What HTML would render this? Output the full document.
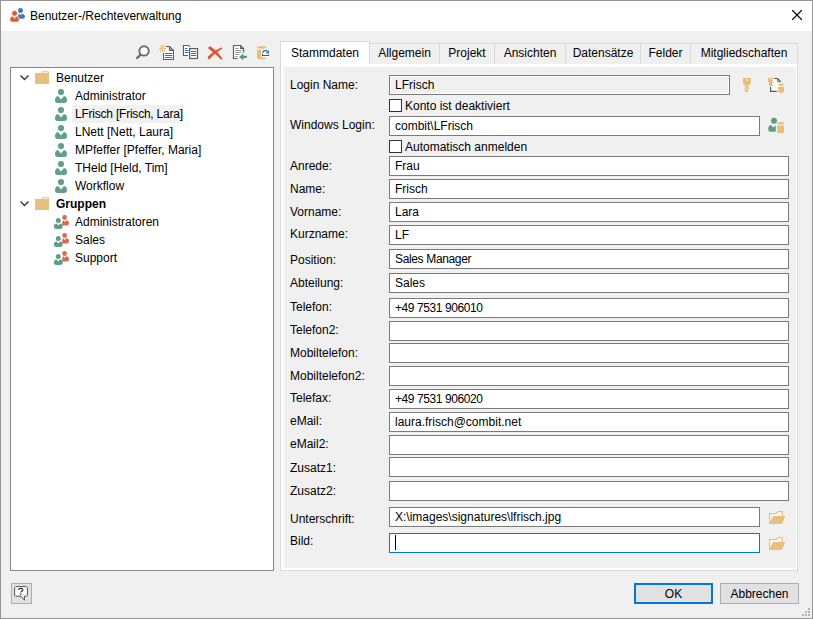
<!DOCTYPE html>
<html><head><meta charset="utf-8"><style>
html,body{margin:0;padding:0;width:813px;height:619px;overflow:hidden;background:#f0f0f0}
*{box-sizing:border-box}
body{font-family:"Liberation Sans",sans-serif;font-size:12px;color:#000;position:relative}
.a{position:absolute}
.t{position:absolute;white-space:pre;line-height:18px;height:18px}
#win{position:absolute;left:0;top:0;width:813px;height:619px;border:1px solid #969696;background:#f0f0f0}
#title{position:absolute;left:1px;top:1px;width:811px;height:30px;background:#fff}
.tree{position:absolute;left:10px;top:67px;width:264px;height:504px;border:1px solid #828790;background:#fff}
.tabs{position:absolute;left:280px;top:63px;width:518px;height:508px;border:1px solid #d9d9d9;background:#fff}
.page{position:absolute;left:284px;top:67px;width:512px;height:501px;background:#f0f0f0}
.tab{position:absolute;top:43px;height:21px;border:1px solid #d9d9d9;border-bottom:none;background:#f0f0f0;line-height:18px;padding-top:0px;text-align:center;white-space:pre}
.tab.sel{top:41px;height:23px;background:#fff;z-index:2;line-height:22px}
.tb{position:absolute;height:20px;border:1px solid #7a7a7a;background:#fff;padding-left:5px;line-height:18px;white-space:pre}
.lbl{position:absolute;left:290px;white-space:pre;line-height:18px;height:18px}
.cb{position:absolute;left:389px;width:13px;height:13px;border:1px solid #333;background:#fff}
.btn{position:absolute;top:583px;height:21px;border:1px solid #adadad;background:#e1e1e1;text-align:center;line-height:19px;padding-top:1px;white-space:pre}
.sel-hl{position:absolute;background:#f1f1f1}
</style></head><body>
<div id="win"></div><div id="title"></div>
<svg class="a" style="left:8px;top:7px" width="20" height="17" viewBox="8 7 20 17">
<circle cx="20.5" cy="10.4" r="2.5" fill="#3f7cbb"/>
<path d="M18 16.6Q18 13.9 19.5 13.7L20.5 15.4L21.5 13.7Q25 14 25 16.6Q25 18.8 22.6 18.8H19.6Q18 18.8 18 16.6Z" fill="#3f7cbb"/>
<circle cx="14.6" cy="13.3" r="2.9" fill="#e05b35" stroke="#fff" stroke-width="0.7"/>
<path d="M9.8 19.8Q9.8 16.4 13 16.1L14.6 18.3L16.2 16.1Q19.3 16.4 19.3 19.8Q19.3 22.1 16.9 22.1H12.2Q9.8 22.1 9.8 19.8Z" fill="#e05b35" stroke="#fff" stroke-width="0.6"/>
</svg>
<div class="t" style="left:30px;top:7px">Benutzer-/Rechteverwaltung</div>
<svg class="a" style="left:790px;top:8px" width="14" height="14" viewBox="790 8 14 14"><path d="M792.5 10.5L801.5 19.5M801.5 10.5L792.5 19.5" stroke="#000" stroke-width="1.1" stroke-linecap="round"/></svg>
<svg class="a" style="left:134px;top:42px" width="140" height="20" viewBox="134 42 140 20">
<circle cx="144.05" cy="50.95" r="4.7" fill="#fff" stroke="#6a6a6a" stroke-width="1.9"/>
<path d="M140.4 54.8L137.1 58" stroke="#6a6a6a" stroke-width="2.3" stroke-linecap="round"/>
<!-- new doc -->
<path d="M166 46.6H169.6L173.4 50.4V59.4H163.6V53" fill="#fff" stroke="#5c5c5c" stroke-width="1.2"/>
<path d="M169.6 46.6V50.4H173.4" fill="none" stroke="#5c5c5c" stroke-width="1.1"/>
<path d="M165.4 47.5H169V51H173V59H164V53H165.4Z" fill="#fff"/>
<path d="M169.6 46.6V50.4H173.4" fill="none" stroke="#5c5c5c" stroke-width="1.1"/>
<path d="M165.4 53.5H171.9M165.4 55.5H171.9M165.4 57.5H171.9" stroke="#3a6db0" stroke-width="1.2" stroke-linecap="round"/>
<g stroke="#eab765" stroke-width="1.2"><path d="M159.1 48.5H166M162.5 45V52"/></g>
<g fill="#eab765"><circle cx="160.3" cy="46.3" r="0.75"/><circle cx="164.7" cy="46.3" r="0.75"/><circle cx="160.3" cy="50.7" r="0.75"/><circle cx="164.7" cy="50.7" r="0.75"/><circle cx="162.5" cy="48.5" r="1.6"/></g>
<circle cx="162.5" cy="48.5" r="0.7" fill="#fff"/>
<!-- copy -->
<path d="M188 55.4H183.5V45.5H188.6L190 46.9" fill="#fff" stroke="#5c5c5c" stroke-width="1.2"/>
<rect x="184" y="46" width="5" height="9" fill="#fff"/>
<path d="M185.3 48.5H186.8M185.3 50.5H188M185.3 52.5H188" stroke="#3a6db0" stroke-width="1.2" stroke-linecap="round"/>
<rect x="189.6" y="48.6" width="7.9" height="9.9" fill="#fff" stroke="#5c5c5c" stroke-width="1.2"/>
<path d="M191.4 51.5H195.8M191.4 53.5H195.8M191.4 55.5H195.8" stroke="#3a6db0" stroke-width="1.2" stroke-linecap="round"/>
<!-- delete -->
<path d="M208.4 48.2Q209 46.6 210.4 46.8Q216 50 222 58.6Q221.6 59.6 221 59.3Q215.6 53 208.4 48.2Z" fill="#d9512c" stroke="#d9512c" stroke-width="0.7" stroke-linejoin="round"/>
<path d="M221.8 48.7Q222.2 47.6 221.2 47.9Q214.6 50.4 208.2 56.8Q207.6 58.4 209.2 59.2Q215 52 221.8 48.7Z" fill="#d9512c" stroke="#d9512c" stroke-width="0.7" stroke-linejoin="round"/>
<!-- import -->
<path d="M237.7 58.5H233.5V45.5H240.6L243.5 48.5V52.5" fill="#fff" stroke="#5c5c5c" stroke-width="1.2"/>
<path d="M240.6 45.6V48.4H243.5" fill="none" stroke="#5c5c5c" stroke-width="1.1"/>
<path d="M235.3 48.5H238.7M235.3 50.5H241.5M235.3 52.5H241.5M235.3 54.5H239.5M235.3 56.5H237.7" stroke="#8c8c8c" stroke-width="0.9"/>
<path d="M246.9 56.9H241.5" stroke="#4e9a7c" stroke-width="2.2"/>
<path d="M239 56.9L243.4 53.6V60.2Z" fill="#4e9a7c"/>
<!-- db refresh -->
<path d="M257 49.6V57.8Q257 59.6 261.6 59.6Q266.2 59.6 266.2 57.8V49.6Q261.6 50.8 257 49.6Z" fill="#e8c07a"/>
<ellipse cx="261.6" cy="47.3" rx="4.6" ry="1.4" fill="#e8c07a"/>
<rect x="261.3" y="49.5" width="8" height="7.8" fill="#fff"/>
<path d="M262.5 53.8V55.5H268.5V54.4" fill="none" stroke="#555" stroke-width="1.1"/>
<path d="M262.6 52.8Q263.4 50.5 265.4 50.5Q266.8 50.5 267.5 51.6" fill="none" stroke="#3978c0" stroke-width="1.5"/>
<path d="M265.6 53.6H269V49.8Z" fill="#3978c0"/>
</svg>
<div class="tree"></div>
<svg class="a" style="left:19px;top:74px" width="12" height="8" viewBox="0 0 12 8"><path d="M1.5 1.5L5.5 5.5L9.5 1.5" fill="none" stroke="#3c3c3c" stroke-width="1.5"/></svg>
<svg class="a" style="left:35px;top:70px" width="16" height="16" viewBox="0 0 16 16"><path d="M0 3H7V2Q7 1 8.2 1H12.8Q14 1 14 2.2V14H0Z" fill="#e8c07d"/><rect x="8" y="1.8" width="5" height="1" rx="0.4" fill="#fff"/></svg>
<div class="t" style="left:56px;top:69px;">Benutzer</div>
<svg class="a" style="left:53px;top:88px" width="16" height="16" viewBox="0 0 16 16"><circle cx="8" cy="4" r="3.1" fill="#61a08a"/><path d="M2 12.2Q2 8.4 5 8L8 11.6L11 8Q14 8.4 14 12.2Q14 14.9 11.2 14.9H4.8Q2 14.9 2 12.2Z" fill="#61a08a"/></svg>
<div class="t" style="left:75px;top:87px;">Administrator</div>
<div class="sel-hl" style="left:72px;top:105px;width:111px;height:18px"></div>
<svg class="a" style="left:53px;top:106px" width="16" height="16" viewBox="0 0 16 16"><circle cx="8" cy="4" r="3.1" fill="#61a08a"/><path d="M2 12.2Q2 8.4 5 8L8 11.6L11 8Q14 8.4 14 12.2Q14 14.9 11.2 14.9H4.8Q2 14.9 2 12.2Z" fill="#61a08a"/></svg>
<div class="t" style="left:75px;top:105px;letter-spacing:-0.22px">LFrisch [Frisch, Lara]</div>
<svg class="a" style="left:53px;top:124px" width="16" height="16" viewBox="0 0 16 16"><circle cx="8" cy="4" r="3.1" fill="#61a08a"/><path d="M2 12.2Q2 8.4 5 8L8 11.6L11 8Q14 8.4 14 12.2Q14 14.9 11.2 14.9H4.8Q2 14.9 2 12.2Z" fill="#61a08a"/></svg>
<div class="t" style="left:75px;top:123px;">LNett [Nett, Laura]</div>
<svg class="a" style="left:53px;top:142px" width="16" height="16" viewBox="0 0 16 16"><circle cx="8" cy="4" r="3.1" fill="#61a08a"/><path d="M2 12.2Q2 8.4 5 8L8 11.6L11 8Q14 8.4 14 12.2Q14 14.9 11.2 14.9H4.8Q2 14.9 2 12.2Z" fill="#61a08a"/></svg>
<div class="t" style="left:75px;top:141px;">MPfeffer [Pfeffer, Maria]</div>
<svg class="a" style="left:53px;top:160px" width="16" height="16" viewBox="0 0 16 16"><circle cx="8" cy="4" r="3.1" fill="#61a08a"/><path d="M2 12.2Q2 8.4 5 8L8 11.6L11 8Q14 8.4 14 12.2Q14 14.9 11.2 14.9H4.8Q2 14.9 2 12.2Z" fill="#61a08a"/></svg>
<div class="t" style="left:75px;top:159px;">THeld [Held, Tim]</div>
<svg class="a" style="left:53px;top:178px" width="16" height="16" viewBox="0 0 16 16"><circle cx="8" cy="4" r="3.1" fill="#61a08a"/><path d="M2 12.2Q2 8.4 5 8L8 11.6L11 8Q14 8.4 14 12.2Q14 14.9 11.2 14.9H4.8Q2 14.9 2 12.2Z" fill="#61a08a"/></svg>
<div class="t" style="left:75px;top:177px;">Workflow</div>
<svg class="a" style="left:19px;top:200px" width="12" height="8" viewBox="0 0 12 8"><path d="M1.5 1.5L5.5 5.5L9.5 1.5" fill="none" stroke="#3c3c3c" stroke-width="1.5"/></svg>
<svg class="a" style="left:35px;top:196px" width="16" height="16" viewBox="0 0 16 16"><path d="M0 3H7V2Q7 1 8.2 1H12.8Q14 1 14 2.2V14H0Z" fill="#e8c07d"/><rect x="8" y="1.8" width="5" height="1" rx="0.4" fill="#fff"/></svg>
<div class="t" style="left:56px;top:195px;font-weight:bold">Gruppen</div>
<svg class="a" style="left:53px;top:214px" width="16" height="16" viewBox="0 0 16 16"><circle cx="11.6" cy="3.5" r="2.4" fill="#d66c52"/><path d="M9.2 11.4V8.8Q9.2 6.4 10.4 6.3L11.7 8L13 6.3Q16 6.4 16 9.4Q16 11.6 13.6 11.6H11Z" fill="#d66c52"/><circle cx="5.3" cy="6.4" r="2.5" fill="#5f9e88"/><path d="M0.8 12.8Q0.8 9.6 3.6 9.4L5.3 11.4L7 9.4Q9.8 9.6 9.8 12.8Q9.8 14.9 7.6 14.9H3Q0.8 14.9 0.8 12.8Z" fill="#5f9e88"/></svg>
<div class="t" style="left:75px;top:213px;">Administratoren</div>
<svg class="a" style="left:53px;top:232px" width="16" height="16" viewBox="0 0 16 16"><circle cx="11.6" cy="3.5" r="2.4" fill="#d66c52"/><path d="M9.2 11.4V8.8Q9.2 6.4 10.4 6.3L11.7 8L13 6.3Q16 6.4 16 9.4Q16 11.6 13.6 11.6H11Z" fill="#d66c52"/><circle cx="5.3" cy="6.4" r="2.5" fill="#5f9e88"/><path d="M0.8 12.8Q0.8 9.6 3.6 9.4L5.3 11.4L7 9.4Q9.8 9.6 9.8 12.8Q9.8 14.9 7.6 14.9H3Q0.8 14.9 0.8 12.8Z" fill="#5f9e88"/></svg>
<div class="t" style="left:75px;top:231px;">Sales</div>
<svg class="a" style="left:53px;top:250px" width="16" height="16" viewBox="0 0 16 16"><circle cx="11.6" cy="3.5" r="2.4" fill="#d66c52"/><path d="M9.2 11.4V8.8Q9.2 6.4 10.4 6.3L11.7 8L13 6.3Q16 6.4 16 9.4Q16 11.6 13.6 11.6H11Z" fill="#d66c52"/><circle cx="5.3" cy="6.4" r="2.5" fill="#5f9e88"/><path d="M0.8 12.8Q0.8 9.6 3.6 9.4L5.3 11.4L7 9.4Q9.8 9.6 9.8 12.8Q9.8 14.9 7.6 14.9H3Q0.8 14.9 0.8 12.8Z" fill="#5f9e88"/></svg>
<div class="t" style="left:75px;top:249px;">Support</div>
<div class="tabs"></div>
<div class="tab sel" style="left:280px;width:90px">Stammdaten</div>
<div class="tab" style="left:369px;width:71px">Allgemein</div>
<div class="tab" style="left:439px;width:56px">Projekt</div>
<div class="tab" style="left:494px;width:72px">Ansichten</div>
<div class="tab" style="left:565px;width:76px">Datensätze</div>
<div class="tab" style="left:640px;width:51px">Felder</div>
<div class="tab" style="left:690px;width:108px">Mitgliedschaften</div>
<div class="page"></div>
<div class="lbl" style="top:76px">Login Name:</div>
<div class="tb" style="left:389px;top:75px;width:341px;background:#f0f0f0;box-shadow:inset 0 0 0 1px #fff">LFrisch</div>
<div class="cb" style="top:99px"></div><div class="t" style="left:405px;top:97px">Konto ist deaktiviert</div>
<div class="lbl" style="top:116px">Windows Login:</div>
<div class="tb" style="left:389px;top:116px;width:371px">combit\LFrisch</div>
<div class="cb" style="top:140px"></div><div class="t" style="left:405px;top:138px">Automatisch anmelden</div>
<div class="lbl" style="top:157px">Anrede:</div>
<div class="tb" style="left:389px;top:156px;width:400px">Frau</div>
<div class="lbl" style="top:180px">Name:</div>
<div class="tb" style="left:389px;top:179px;width:400px">Frisch</div>
<div class="lbl" style="top:203px">Vorname:</div>
<div class="tb" style="left:389px;top:202px;width:400px">Lara</div>
<div class="lbl" style="top:225px">Kurzname:</div>
<div class="tb" style="left:389px;top:225px;width:400px">LF</div>
<div class="lbl" style="top:251px">Position:</div>
<div class="tb" style="left:389px;top:249px;width:400px"><span style="letter-spacing:-0.35px">Sales Manager</span></div>
<div class="lbl" style="top:274px">Abteilung:</div>
<div class="tb" style="left:389px;top:273px;width:400px">Sales</div>
<div class="lbl" style="top:298px">Telefon:</div>
<div class="tb" style="left:389px;top:298px;width:400px"><span style="letter-spacing:-0.42px">+49 7531 906010</span></div>
<div class="lbl" style="top:321px">Telefon2:</div>
<div class="tb" style="left:389px;top:321px;width:400px"></div>
<div class="lbl" style="top:344px">Mobiltelefon:</div>
<div class="tb" style="left:389px;top:343px;width:400px"></div>
<div class="lbl" style="top:367px">Mobiltelefon2:</div>
<div class="tb" style="left:389px;top:366px;width:400px"></div>
<div class="lbl" style="top:389px">Telefax:</div>
<div class="tb" style="left:389px;top:389px;width:400px"><span style="letter-spacing:-0.42px">+49 7531 906020</span></div>
<div class="lbl" style="top:412px">eMail:</div>
<div class="tb" style="left:389px;top:412px;width:400px">laura.frisch@combit.net</div>
<div class="lbl" style="top:435px">eMail2:</div>
<div class="tb" style="left:389px;top:435px;width:400px"></div>
<div class="lbl" style="top:459px">Zusatz1:</div>
<div class="tb" style="left:389px;top:457px;width:400px"></div>
<div class="lbl" style="top:482px">Zusatz2:</div>
<div class="tb" style="left:389px;top:481px;width:400px"></div>
<div class="lbl" style="top:510px">Unterschrift:</div>
<div class="tb" style="left:389px;top:507px;width:371px">X:\images\signatures\lfrisch.jpg</div>
<div class="lbl" style="top:532px">Bild:</div>
<div class="tb" style="left:389px;top:533px;width:371px;border-color:#0078d7"></div>
<div class="a" style="left:395px;top:535px;width:1px;height:15px;background:#000"></div>
<svg class="a" style="left:740px;top:74px" width="48" height="22" viewBox="740 74 48 22">
<path d="M743 78H750.8V82.2Q750.8 84.6 748.2 85.1V86H749.3V87H748.2V88H749.3V89H748.2V90.6L746.4 92.8L744.8 91V85.1Q743 84.6 743 82.2Z" fill="#e8bd72"/>
<rect x="746.2" y="79.3" width="1.5" height="1.5" fill="#fff"/>
<path d="M746.5 85.6V90.4" stroke="#fff" stroke-width="0.6"/>
<path d="M771 79H777.6L780.6 82V88H777V91H771Z" fill="#fff"/>
<path d="M774.2 78.5H777.5L780.7 81.7M770.6 87V91.4H776.8" fill="none" stroke="#555" stroke-width="1.2"/>
<path d="M777.6 78.8V81.8H780.5" fill="none" stroke="#555" stroke-width="0.8"/>
<path d="M768.1 78H772.9V81.9H772V83H773V84H772V85H773V86H769V81.9H768.1Z" fill="#e8bd72"/>
<rect x="770" y="78.8" width="1.2" height="1.2" fill="#fff"/>
<path d="M778.1 86.8V91.6Q778.1 92.9 781 92.9Q784 92.9 784 91.6V86.8Z" fill="#e8c07a"/>
<ellipse cx="781" cy="84.6" rx="3" ry="1.2" fill="#e8c07a"/>
</svg>
<svg class="a" style="left:764px;top:114px" width="24" height="22" viewBox="764 114 24 22">
<circle cx="774" cy="120.8" r="3" fill="#5a9e84"/>
<path d="M768.2 129.4Q768.2 125.4 771 125.1L773.2 127.6L775.8 125.4V131.8H770.6Q768.2 131.8 768.2 129.4Z" fill="#5a9e84"/>
<path d="M777.2 125.6V132Q777.2 133.2 780.6 133.2Q784 133.2 784 132V125.6Z" fill="#e8c07a"/>
<ellipse cx="780.6" cy="123.3" rx="3.5" ry="1.3" fill="#e8c07a"/>
</svg>
<svg class="a" style="left:766px;top:508px" width="22" height="18" viewBox="766 508 22 18"><path d="M769.6 523.4V513.6H776.2L778.3 511.6H782.3V516.6" fill="#fff" stroke="#e8c07d" stroke-width="1.2"/><path d="M772.9 516.1H785.3L781.9 523.9H769.1Z" fill="#e8c07d"/></svg>
<svg class="a" style="left:766px;top:534px" width="22" height="18" viewBox="766 508 22 18"><path d="M769.6 523.4V513.6H776.2L778.3 511.6H782.3V516.6" fill="#fff" stroke="#e8c07d" stroke-width="1.2"/><path d="M772.9 516.1H785.3L781.9 523.9H769.1Z" fill="#e8c07d"/></svg>
<div class="btn" style="left:11px;width:21px"></div>
<svg class="a" style="left:11px;top:583px" width="21" height="21" viewBox="11 583 21 21">
<path d="M15.6 586.6H26.4L27.4 587.6V595.2L26.4 596.2H24.4V600.2L21 596.2H15.6L14.6 595.2V587.6Z" fill="#fff" stroke="#505050" stroke-width="1"/>
<path d="M18.7 589.9Q18.8 588.3 20.8 588.3Q22.8 588.3 22.8 589.7Q22.8 590.7 21.7 591.3Q20.8 591.8 20.8 592.4" fill="none" stroke="#333" stroke-width="1.3"/>
<rect x="20" y="593.7" width="1.6" height="1.2" fill="#333"/>
</svg>
<div class="btn" style="left:634px;width:79px;border:2px solid #0078d7;line-height:17px">OK</div>
<div class="btn" style="left:720px;width:79px">Abbrechen</div>
<svg class="a" style="left:800px;top:606px" width="12" height="12" viewBox="800 606 12 12">
<g fill="#b4b4b4"><rect x="808" y="608" width="2" height="2"/><rect x="805" y="611" width="2" height="2"/><rect x="808" y="611" width="2" height="2"/><rect x="802" y="614" width="2" height="2"/><rect x="805" y="614" width="2" height="2"/><rect x="808" y="614" width="2" height="2"/></g></svg>
</body></html>
